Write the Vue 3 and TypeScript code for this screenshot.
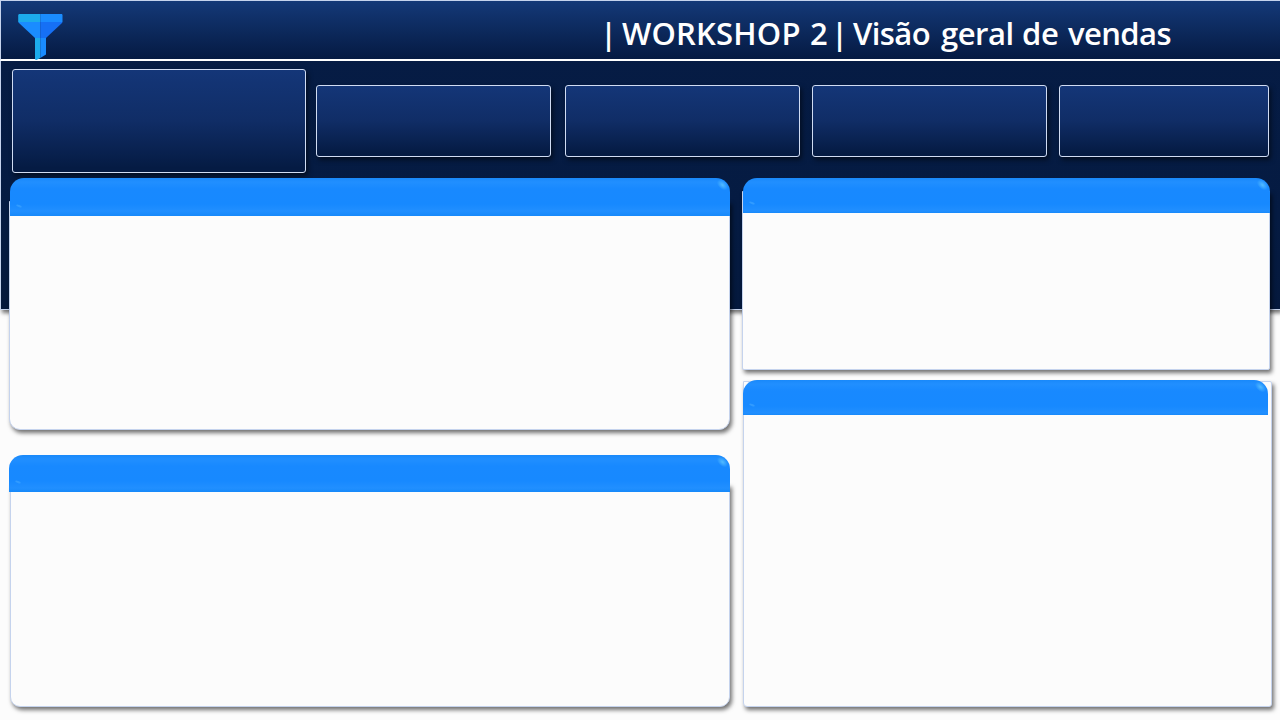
<script setup lang="ts">
interface Panel {
  id: string
}
interface Word {
  text: string
  cls: string
}

const words: Word[] = [
  { text: '|', cls: 'w-bar' },
  { text: 'WORKSHOP', cls: 'w-workshop' },
  { text: '2', cls: 'w-two' },
  { text: '|', cls: 'w-bar2' },
  { text: 'Visão', cls: 'w-visao' },
  { text: 'geral', cls: 'w-geral' },
  { text: 'de', cls: 'w-de' },
  { text: 'vendas', cls: 'w-vendas' },
]
const kpis: string[] = ['main', 'second', 'third', 'fourth', 'fifth']
const left: Panel[] = [{ id: 'a' }, { id: 'b' }]
const right: Panel[] = [{ id: 'c' }, { id: 'd' }]
</script>

<template>
  <div class="page">
    <div class="backdrop"></div>
    <header class="top">
      <svg class="funnel" width="46" height="46" viewBox="0 0 46 46">
        <path d="M1 0H22.300V8H0.200V1Z" fill="#1cabeb" />
        <path d="M22.300 0H44L44.500 1V8H22.300Z" fill="#1a8cff" />
        <path d="M0.200 8H22.300V24H17L1 9Z" fill="#1a8cff" />
        <path d="M22.300 8H44.500L44 9L28 24H22.300Z" fill="#1670f5" />
        <path d="M17 24H22.300V44L18.500 46L17 45.500Z" fill="#1cabeb" />
        <path d="M22.300 24H28V40.500L22.300 44Z" fill="#1a8cff" />
      </svg>
      <h1 class="title">
        <span v-for="(w, i) in words" :key="i" :class="w.cls">{{ w.text }}</span>
      </h1>
    </header>
    <section class="kpis">
      <div v-for="k in kpis" :key="k" class="kpi" :class="k"></div>
    </section>
    <main class="columns">
      <div class="col col-left">
        <article v-for="p in left" :key="p.id" class="panel" :class="'panel-' + p.id">
          <div class="head"></div>
          <div class="body"></div>
        </article>
      </div>
      <div class="col col-right">
        <article v-for="p in right" :key="p.id" class="panel" :class="'panel-' + p.id">
          <div class="head"></div>
          <div class="body"></div>
        </article>
      </div>
    </main>
  </div>
</template>

<style scoped>
.page {
  position: relative;
  width: 1280px;
  height: 720px;
  overflow: hidden;
  background: #fcfcfc;
  box-sizing: border-box;
}
.page * {
  box-sizing: border-box;
}
.backdrop {
  position: absolute;
  inset: 0 0 auto 0;
  height: 310px;
  background: linear-gradient(#061c45, #051b42 70%, #05193d);
  border-left: 1px solid #c5d3ed;
  border-bottom: 1px solid #c5d3ed;
  box-shadow: 2px 3px 4px rgba(0, 0, 0, 0.55);
}
.top {
  position: relative;
  display: flex;
  justify-content: space-between;
  height: 61px;
  padding: 0 0 0 17px;
  background: linear-gradient(#143978, #051a42);
  border-top: 1px solid #c5d3ed;
  border-left: 1px solid #c5d3ed;
  border-bottom: 2px solid #fff;
}
.funnel {
  margin-top: 13px;
  flex: none;
}
.title {
  display: flex;
  width: 680px;
  margin: 10px 0 0;
  font: 600 31px/44px "Open Sans", "Noto Sans", sans-serif;
  color: #fff;
  white-space: pre;
}
.title span {
  flex: none;
}
.w-bar {
  width: 22px;
}
.w-workshop {
  width: 188px;
  letter-spacing: 0.2px;
}
.w-two {
  width: 21px;
}
.w-bar2 {
  width: 22px;
}
.w-visao {
  width: 88px;
  letter-spacing: -0.6px;
}
.w-geral {
  width: 81px;
  letter-spacing: -0.5px;
}
.w-de {
  width: 46px;
  letter-spacing: -0.3px;
}
.w-vendas {
  letter-spacing: -0.6px;
}
.kpis {
  position: relative;
  display: flex;
  align-items: center;
  height: 104px;
  margin: 8px 0 0 12px;
}
.kpi {
  flex: none;
  width: 235px;
  height: 72px;
  border: 1px solid #d0dcf3;
  border-radius: 3px;
  background: linear-gradient(#143678, #102d66 50%, #051b43 96%);
  box-shadow: 2px 3px 5px rgba(0, 0, 0, 0.5);
}
.main {
  width: 294px;
  height: 104px;
  margin-right: 10px;
}
.second {
  margin-right: 14px;
}
.third,
.fourth {
  margin-right: 12px;
}
.fifth {
  width: 210px;
}
.columns {
  position: relative;
  display: flex;
  margin: 5px 0 0 9px;
}
.col {
  flex: none;
  display: flex;
  flex-direction: column;
}
.col-left {
  width: 721px;
  gap: 25px;
  margin-right: 12px;
}
.col-right {
  width: 530px;
  gap: 10px;
}
.head {
  position: relative;
  z-index: 1;
  border-radius: 14px 14px 0 0;
  overflow: hidden;
  background: linear-gradient(#1989fa 0, #218fff 4px, #1889ff 11px, #1789ff 26px, #218fff 33px, #1789fa 100%);
}
.head::before {
  content: "";
  position: absolute;
  right: 1px;
  top: 3px;
  width: 13px;
  height: 8px;
  background: radial-gradient(closest-side, #52bbff, rgba(60, 165, 255, 0));
  transform: rotate(42deg);
}
.head::after {
  content: "";
  position: absolute;
  left: 6px;
  bottom: 9px;
  width: 6px;
  height: 2px;
  border-radius: 50%;
  background: #319bff;
  transform: rotate(22deg);
}
.body {
  background: #fcfcfc;
  border: 1px solid #c5d3ed;
  box-shadow: 2px 3px 4px rgba(0, 0, 0, 0.55);
}
.panel-a .head {
  height: 38px;
  margin-left: 1px;
}
.panel-a .body {
  height: 229px;
  margin-top: -15px;
  border-radius: 0 0 11px 11px;
}
.panel-b .head {
  height: 37px;
}
.panel-b .body {
  height: 223px;
  margin: -8px 0 0 1px;
  border-radius: 0 0 10px 10px;
}
.panel-c .head {
  height: 35px;
  margin: 0 2px 0 1px;
}
.panel-c .body {
  height: 179px;
  margin: -22px 2px 0 0;
  border-radius: 0 0 2px 2px;
}
.panel-d .head {
  height: 35px;
  margin: 0 4px 0 1px;
}
.panel-d .body {
  height: 326px;
  margin: -34px 0 0 1px;
  border-radius: 0 2px 3px 4px;
}
</style>
